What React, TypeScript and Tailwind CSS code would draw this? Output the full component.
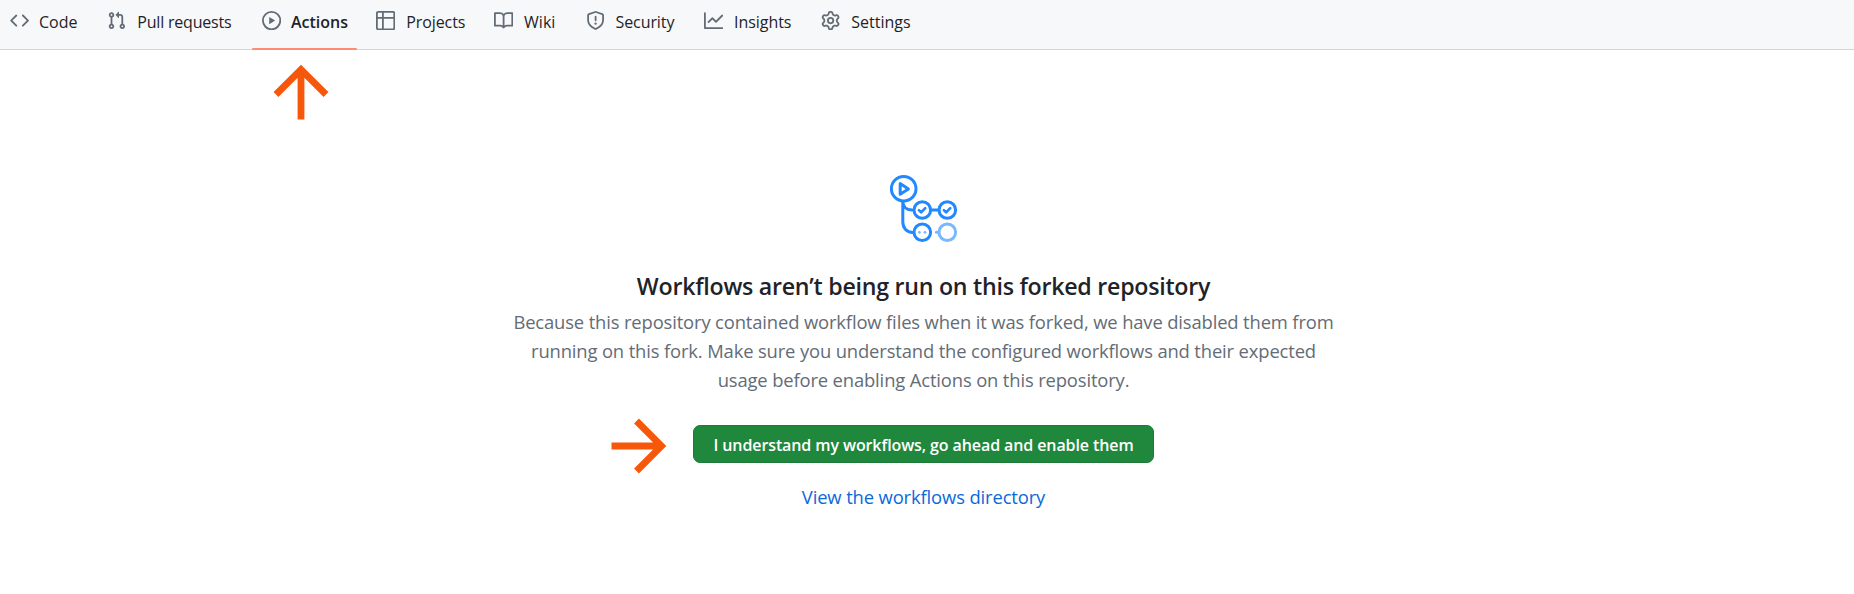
import React from "react";

type Tab = { label: string; path: string; width: string; text: string };

const tabs: Tab[] = [
  {
    label: "Code",
    width: "w-[97.5px]",
    text: "ml-[10px]",
    path: "m11.28 3.22 4.25 4.25a.75.75 0 0 1 0 1.06l-4.25 4.25a.749.749 0 0 1-1.275-.326.749.749 0 0 1 .215-.734L13.94 8l-3.72-3.72a.749.749 0 0 1 .326-1.275.749.749 0 0 1 .734.215Zm-6.56 0a.751.751 0 0 1 1.042.018.751.751 0 0 1 .018 1.042L2.06 8l3.72 3.72a.749.749 0 0 1-.326 1.275.749.749 0 0 1-.734-.215L.47 8.53a.75.75 0 0 1 0-1.06Z",
  },
  {
    label: "Pull requests",
    width: "w-[154.5px]",
    text: "ml-[10.8px] tracking-[-0.2px]",
    path: "M1.5 3.25a2.25 2.25 0 1 1 3 2.122v5.256a2.251 2.251 0 1 1-1.5 0V5.372A2.25 2.25 0 0 1 1.5 3.25Zm5.677-.177L9.573.677A.25.25 0 0 1 10 .854V2.5h1A2.5 2.5 0 0 1 13.5 5v5.628a2.251 2.251 0 1 1-1.5 0V5a1 1 0 0 0-1-1h-1v1.646a.25.25 0 0 1-.427.177L7.177 3.427a.25.25 0 0 1 0-.354ZM3.75 2.5a.75.75 0 1 0 0 1.5.75.75 0 0 0 0-1.5Zm0 9.5a.75.75 0 1 0 0 1.5.75.75 0 0 0 0-1.5Zm8.25.75a.75.75 0 1 0 1.5 0 .75.75 0 0 0-1.5 0Z",
  },
  {
    label: "Actions",
    width: "w-[114.3px]",
    text: "ml-[10px] font-semibold",
    path: "M8 0a8 8 0 1 1 0 16A8 8 0 0 1 8 0ZM1.5 8a6.5 6.5 0 1 0 13 0 6.5 6.5 0 0 0-13 0Zm4.879-2.773 4.264 2.559a.25.25 0 0 1 0 .428l-4.264 2.559A.25.25 0 0 1 6 10.559V5.442a.25.25 0 0 1 .379-.215Z",
  },
  {
    label: "Projects",
    width: "w-[118px]",
    text: "ml-[11px] tracking-[-0.1px]",
    path: "M0 1.75C0 .784.784 0 1.75 0h12.5C15.216 0 16 .784 16 1.75v12.5A1.75 1.75 0 0 1 14.25 16H1.75A1.75 1.75 0 0 1 0 14.25ZM6.5 6.5v8h7.75a.25.25 0 0 0 .25-.25V6.5Zm8-1.5V1.75a.25.25 0 0 0-.25-.25H6.5V5Zm-13 1.5v7.75c0 .138.112.25.25.25H5v-8ZM5 5V1.5H1.75a.25.25 0 0 0-.25.25V5Z",
  },
  {
    label: "Wiki",
    width: "w-[91.7px]",
    text: "ml-[10.8px]",
    path: "M0 1.75A.75.75 0 0 1 .75 1h4.253c1.227 0 2.317.59 3 1.501A3.743 3.743 0 0 1 11.006 1h4.245a.75.75 0 0 1 .75.75v10.5a.75.75 0 0 1-.75.75h-4.507a2.25 2.25 0 0 0-1.591.659l-.622.621a.75.75 0 0 1-1.06 0l-.622-.621A2.25 2.25 0 0 0 5.258 13H.75a.75.75 0 0 1-.75-.75Zm7.251 10.324.004-5.073-.002-2.253A2.25 2.25 0 0 0 5.003 2.5H1.5v9h3.757a3.75 3.75 0 0 1 1.994.574ZM8.755 4.75l-.004 7.322a3.752 3.752 0 0 1 1.992-.572H14.5v-9h-3.495a2.25 2.25 0 0 0-2.25 2.25Z",
  },
  {
    label: "Security",
    width: "w-[118.3px]",
    text: "ml-[10.6px] tracking-[-0.1px]",
    path: "M7.467.133a1.748 1.748 0 0 1 1.066 0l5.25 1.68A1.75 1.75 0 0 1 15 3.48V7c0 1.566-.32 3.182-1.303 4.682-.983 1.498-2.585 2.813-5.032 3.855a1.697 1.697 0 0 1-1.33 0c-2.447-1.042-4.049-2.357-5.032-3.855C1.32 10.182 1 8.566 1 7V3.48a1.75 1.75 0 0 1 1.217-1.667Zm.61 1.429a.25.25 0 0 0-.153 0l-5.25 1.68a.25.25 0 0 0-.174.238V7c0 1.358.275 2.666 1.057 3.86.784 1.194 2.121 2.34 4.366 3.297a.196.196 0 0 0 .154 0c2.245-.956 3.582-2.104 4.366-3.298C13.225 9.666 13.5 8.36 13.5 7V3.48a.251.251 0 0 0-.174-.237l-5.25-1.68ZM8.75 4.75v3a.75.75 0 0 1-1.5 0v-3a.75.75 0 0 1 1.5 0ZM9 10.5a1 1 0 1 1-2 0 1 1 0 0 1 2 0Z",
  },
  {
    label: "Insights",
    width: "w-[117px]",
    text: "ml-[10.8px] tracking-[-0.05px]",
    path: "M1.5 1.75V13.5h13.75a.75.75 0 0 1 0 1.5H.75a.75.75 0 0 1-.75-.75V1.75a.75.75 0 0 1 1.5 0Zm14.28 2.53-5.25 5.25a.75.75 0 0 1-1.06 0L7 7.06 4.28 9.78a.751.751 0 0 1-1.042-.018.751.751 0 0 1-.018-1.042l3.25-3.25a.75.75 0 0 1 1.06 0L10 7.94l4.72-4.72a.751.751 0 0 1 1.042.018.751.751 0 0 1 .018 1.042Z",
  },
  {
    label: "Settings",
    width: "w-[117px]",
    text: "ml-[11px]",
    path: "M8 0a8.2 8.2 0 0 1 .701.031C9.444.095 9.99.645 10.16 1.29l.288 1.107c.018.066.079.158.212.224.231.114.454.243.668.386.123.082.233.09.299.071l1.103-.303c.644-.176 1.392.021 1.82.63.27.385.506.792.704 1.218.315.675.111 1.422-.364 1.891l-.814.806c-.049.048-.098.147-.088.294.016.257.016.515 0 .772-.01.147.038.246.088.294l.814.806c.475.469.679 1.216.364 1.891a7.977 7.977 0 0 1-.704 1.217c-.428.61-1.176.807-1.82.63l-1.102-.302c-.067-.019-.177-.011-.3.071a5.909 5.909 0 0 1-.668.386c-.133.066-.194.158-.211.224l-.29 1.106c-.168.646-.715 1.196-1.458 1.26a8.006 8.006 0 0 1-1.402 0c-.743-.064-1.289-.614-1.458-1.26l-.289-1.106c-.018-.066-.079-.158-.212-.224a5.738 5.738 0 0 1-.668-.386c-.123-.082-.233-.09-.299-.071l-1.103.303c-.644.176-1.392-.021-1.82-.63a8.12 8.12 0 0 1-.704-1.218c-.315-.675-.111-1.422.363-1.891l.815-.806c.05-.048.098-.147.088-.294a6.214 6.214 0 0 1 0-.772c.01-.147-.038-.246-.088-.294l-.815-.806C.635 6.045.431 5.298.746 4.623a7.92 7.92 0 0 1 .704-1.217c.428-.61 1.176-.807 1.82-.63l1.102.302c.067.019.177.011.3-.071.214-.143.437-.272.668-.386.133-.066.194-.158.211-.224l.29-1.106C6.009.645 6.556.095 7.299.03 7.53.01 7.764 0 8 0Zm-.571 1.525c-.036.003-.108.036-.137.146l-.289 1.105c-.147.561-.549.967-.998 1.189-.173.086-.34.183-.5.29-.417.278-.97.423-1.529.27l-1.103-.303c-.109-.03-.175.016-.195.045-.22.312-.412.644-.573.99-.014.031-.021.11.059.19l.815.806c.411.406.562.957.53 1.456a4.709 4.709 0 0 0 0 .582c.032.499-.119 1.05-.53 1.456l-.815.806c-.081.08-.073.159-.059.19.162.346.353.677.573.989.02.03.085.076.195.046l1.102-.303c.56-.153 1.113-.008 1.53.27.161.107.328.204.501.29.447.222.85.629.997 1.189l.289 1.105c.029.109.101.143.137.146a6.6 6.6 0 0 0 1.142 0c.036-.003.108-.036.137-.146l.289-1.105c.147-.561.549-.967.998-1.189.173-.086.34-.183.5-.29.417-.278.97-.423 1.529-.27l1.103.303c.109.029.175-.016.195-.045.22-.313.411-.644.573-.99.014-.031.021-.11-.059-.19l-.815-.806c-.411-.406-.562-.957-.53-1.456a4.709 4.709 0 0 0 0-.582c-.032-.499.119-1.05.53-1.456l.815-.806c.081-.08.073-.159.059-.19a6.464 6.464 0 0 0-.573-.989c-.02-.03-.085-.076-.195-.046l-1.102.303c-.56.153-1.113.008-1.53-.27a4.44 4.44 0 0 0-.501-.29c-.447-.222-.85-.629-.997-1.189l-.289-1.105c-.029-.11-.101-.143-.137-.146a6.6 6.6 0 0 0-1.142 0ZM11 8a3 3 0 1 1-6 0 3 3 0 0 1 6 0ZM9.5 8a1.5 1.5 0 1 0-3.001.001A1.5 1.5 0 0 0 9.5 8Z",
  },
];

function Arrow({ className }: { className: string }) {
  return (
    <svg viewBox="0 0 56 56" className={className} fill="none" stroke="#f7570b" strokeWidth="6.8">
      <path d="M28 55.5V6M3 30.5 28 5.5l25 25" />
    </svg>
  );
}

function WorkflowGraphic() {
  return (
    <svg viewBox="0 0 80 80" className="ml-[2px] h-20 w-20" fill="none" stroke="#2188ff" strokeWidth="3" strokeLinecap="round" strokeLinejoin="round">
      <circle cx="18.7" cy="18.7" r="12.3" />
      <path d="M15.2 13.6v10.6l8.2-5.3Z" />
      <path d="M17.8 31.2c0 5 3.2 8.8 9.3 8.8M17.8 31.2v20.6c0 6.2 4 10.6 9.8 10.6M45.9 40h8" />
      <circle cx="37.3" cy="40" r="8.3" />
      <circle cx="62.3" cy="40" r="8.3" />
      <circle cx="37.3" cy="62.3" r="8.3" />
      <path strokeWidth="2.6" d="m33.9 40.2 2.2 2.2 4.2-4.2M58.9 40.2l2.2 2.2 4.2-4.2" />
      <g stroke="#79b8ff">
        <circle cx="62.3" cy="62.3" r="8.3" />
        <path d="M51.4 62.3h1.6" />
      </g>
      <g fill="#79b8ff" stroke="none">
        <circle cx="34.4" cy="62.3" r="1.4" />
        <circle cx="40" cy="62.3" r="1.4" />
      </g>
    </svg>
  );
}

export default function App() {
  return (
    <div className="h-[594px] overflow-hidden bg-white font-['Open_Sans','Noto_Sans',sans-serif] text-[#1f2328]">
      <nav className="flex h-[50px] border-b border-[#d0d7de] bg-[#f6f8fa] pl-[9.8px]">
        {tabs.map((tab) => (
          <a key={tab.label} className={`relative flex h-[50px] shrink-0 items-start pt-[11px] ${tab.width}`}>
            <svg viewBox="0 0 16 16" className="h-[19.2px] w-[19.2px] shrink-0 fill-[#636c76]">
              <path d={tab.path} />
            </svg>
            <span className={`whitespace-nowrap text-[16px] leading-[22px] ${tab.text}`}>{tab.label}</span>
            {tab.label === "Actions" && (
              <>
                <span className="absolute -left-[9.4px] top-[47.6px] h-[2.4px] w-[105px] rounded-full bg-[#fd8c73]" />
                <Arrow className="absolute left-[10.8px] top-[64px] h-14 w-14" />
              </>
            )}
          </a>
        ))}
      </nav>
      <main className="flex w-[1847px] flex-col items-center pt-[120px]">
        <WorkflowGraphic />
        <h1 className="mt-[18px] whitespace-nowrap text-[23.2px] font-semibold leading-9 tracking-[-0.26px]">
          Workflows aren’t being run on this forked repository
        </h1>
        <p className="mt-[4px] text-center text-[18.4px] leading-[28.9px] tracking-[-0.14px] text-[#636c76]">
          Because this repository contained workflow files when it was forked, we have disabled them from
          <br />
          running on this fork. Make sure you understand the configured workflows and their expected
          <br />
          usage before enabling Actions on this repository.
        </p>
        <div className="relative mt-[30px]">
          <button className="block h-[38px] w-[461px] whitespace-nowrap rounded-[7px] border border-[#1f7a3a] bg-[#1f883d] pt-px text-[16px] font-semibold leading-9 tracking-[-0.1px] text-white">
            I understand my workflows, go ahead and enable them
          </button>
          <Arrow className="absolute -left-[82.3px] top-[-7px] h-14 w-14 rotate-90" />
        </div>
        <a className="mt-[19px] text-[18.4px] leading-[29px] tracking-[-0.13px] text-[#0969da]">View the workflows directory</a>
      </main>
    </div>
  );
}
